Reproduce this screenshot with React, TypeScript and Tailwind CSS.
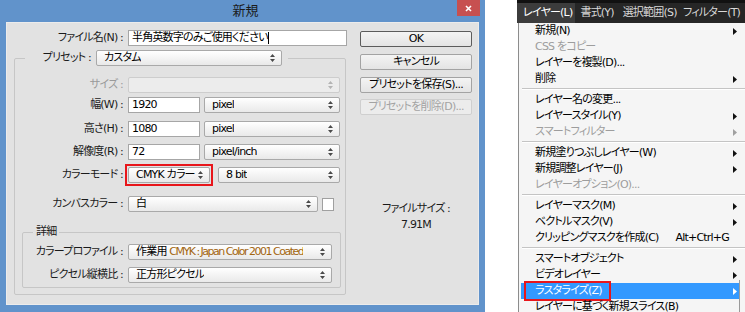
import React from "react";

const FONT = "[font-family:'DejaVu_Sans','Noto_Sans_CJK_JP',sans-serif] [font-feature-settings:'palt'] tracking-[-0.8px]";

function Arrows({ disabled }: { disabled?: boolean }) {
  return (
    <svg width="5" height="8" viewBox="0 0 5 8" className="shrink-0">
      <path d="M2.5 0 L5 3 H0 Z M2.5 8 L0 5 H5 Z" fill={disabled ? "#b4b4b4" : "#4a4a4a"} />
    </svg>
  );
}

function Select({ w, children, disabled }: { w: string; children?: React.ReactNode; disabled?: boolean }) {
  return (
    <div
      className={`${w} h-[16px] flex items-center justify-between pl-[7px] pr-[6px] rounded-[2px] border ${
        disabled ? "border-[#cdcdcd] bg-[#ececec]" : "border-[#a9a9a9] bg-linear-to-b from-white to-[#e9e9e9]"
      } text-[11px] leading-[14px] text-black whitespace-nowrap overflow-hidden shrink-0`}
    >
      <span className="truncate">{children}</span>
      <Arrows disabled={disabled} />
    </div>
  );
}

function Input({ w, children }: { w: string; children?: React.ReactNode }) {
  return (
    <div className={`${w} h-[16px] border border-[#a6a6a6] bg-white pl-[3px] text-[11px] leading-[14px] text-black whitespace-nowrap overflow-hidden shrink-0`}>
      {children}
    </div>
  );
}

function Label({ w, children, disabled }: { w: string; children: React.ReactNode; disabled?: boolean }) {
  return (
    <div className={`${w} shrink-0 text-right text-[11px] leading-[16px] whitespace-nowrap ${disabled ? "text-[#9a9a9a]" : "text-[#1a1a1a]"}`}>
      {children}
    </div>
  );
}

function Btn({ children, disabled, primary, className = "" }: { children: React.ReactNode; disabled?: boolean; primary?: boolean; className?: string }) {
  return (
    <div
      className={`w-[112px] h-[16px] flex items-center justify-center rounded-[2px] border text-[11px] leading-[14px] whitespace-nowrap ${
        disabled
          ? "border-[#cfcfcf] bg-[#ececec] text-[#a3a3a3]"
          : primary
          ? "border-[#5c5c5c] bg-linear-to-b from-[#f4f4f4] to-[#e4e4e4] text-black"
          : "border-[#a3a3a3] bg-linear-to-b from-[#f4f4f4] to-[#e4e4e4] text-black"
      } ${className}`}
    >
      {children}
    </div>
  );
}

function Dialog() {
  return (
    <div className="w-[485px] h-[312px] bg-[#6193cb] flex flex-col px-[6px] shrink-0">
      <div className="relative -mx-[6px] h-[22px] flex items-center justify-center">
        <span className="text-[13px] leading-[16px] text-[#1b1b1b] ml-[6px] tracking-normal">新規</span>
        <div className="absolute right-[5px] top-0 w-[23px] h-[16px] bg-[#c75050] flex items-center justify-center">
          <svg width="7" height="7" viewBox="0 0 7 7">
            <path d="M1 1 L6 6 M6 1 L1 6" stroke="white" strokeWidth="1.6" />
          </svg>
        </div>
      </div>
      <div className="h-[283px] bg-[#e2e2e2] flex border border-[#ececec]">
        {/* left column */}
        <div className="w-[340px] pt-[7px] shrink-0">
          <div className="flex items-center h-[16px]">
            <Label w="w-[116px]">ファイル名(N) :</Label>
            <div className="ml-[5px]">
              <Input w="w-[219px]">
                半角英数字のみご使用ください<span className="inline-block w-px h-[12px] bg-black align-middle" />
              </Input>
            </div>
          </div>

          <fieldset className="ml-[7px] mt-[4px] w-[332px] border border-[#c6c6c6] rounded-[2px] pb-[6px]">
            <legend className="ml-[10px] pr-[6px]">
              <div className="flex items-center h-[16px]">
                <Label w="w-[66px]">プリセット :</Label>
                <div className="ml-[5px]">
                  <Select w="w-[186px]">カスタム</Select>
                </div>
              </div>
            </legend>

            <div className="flex items-center h-[16px] mt-[11px]">
              <Label w="w-[108px]" disabled>サイズ :</Label>
              <div className="ml-[5px]">
                <Select w="w-[212px]" disabled />
              </div>
            </div>

            <div className="flex items-center h-[16px] mt-[4px]">
              <Label w="w-[108px]">幅(W) :</Label>
              <div className="ml-[5px] flex gap-[4px]">
                <Input w="w-[72px]">1920</Input>
                <Select w="w-[136px]">pixel</Select>
              </div>
            </div>

            <div className="flex items-center h-[16px] mt-[8px]">
              <Label w="w-[108px]">高さ(H) :</Label>
              <div className="ml-[5px] flex gap-[4px]">
                <Input w="w-[72px]">1080</Input>
                <Select w="w-[136px]">pixel</Select>
              </div>
            </div>

            <div className="flex items-center h-[16px] mt-[7px]">
              <Label w="w-[108px]">解像度(R) :</Label>
              <div className="ml-[5px] flex gap-[4px]">
                <Input w="w-[72px]">72</Input>
                <Select w="w-[136px]">pixel/inch</Select>
              </div>
            </div>

            <div className="flex items-center h-[16px] mt-[7px]">
              <Label w="w-[108px]">カラーモード :</Label>
              <div className="ml-[5px] flex gap-[8px]">
                <div className="relative">
                  <Select w="w-[82px]">CMYK カラー</Select>
                  <div className="absolute -left-[3px] -top-[3px] w-[88px] h-[22px] border-2 border-[#e8161b]" />
                </div>
                <Select w="w-[122px]">8 bit</Select>
              </div>
            </div>

            <div className="flex items-center h-[16px] mt-[13px]">
              <Label w="w-[108px]">カンバスカラー :</Label>
              <div className="ml-[5px] flex items-center gap-[4px]">
                <Select w="w-[190px]">白</Select>
                <div className="w-[12px] h-[13px] border border-[#a0a0a0] bg-white" />
              </div>
            </div>

            <fieldset className="ml-[7px] mt-[13px] w-[319px] border border-[#c6c6c6] rounded-[2px] pb-[4px]">
              <legend className="ml-[10px] px-[3px] text-[11px] leading-[14px] text-[#1a1a1a]">詳細</legend>
              <div className="flex items-center h-[16px] mt-[5px]">
                <Label w="w-[100px]">カラープロファイル :</Label>
                <div className="ml-[5px]">
                  <Select w="w-[204px]">
                    作業用 <span className="text-[#a3660f] tracking-[-1.5px]">CMYK : Japan Color 2001 Coated</span>
                  </Select>
                </div>
              </div>
              <div className="flex items-center h-[16px] mt-[7px]">
                <Label w="w-[100px]">ピクセル縦横比 :</Label>
                <div className="ml-[5px]">
                  <Select w="w-[204px]">正方形ピクセル</Select>
                </div>
              </div>
            </fieldset>
          </fieldset>
        </div>

        {/* right column */}
        <div className="ml-[13px] pt-[8px] flex flex-col items-center w-[112px]">
          <Btn primary>OK</Btn>
          <Btn className="mt-[7px]">キャンセル</Btn>
          <Btn className="mt-[7px]">プリセットを保存(S)...</Btn>
          <Btn className="mt-[6px]" disabled>プリセットを削除(D)...</Btn>
          <div className="mt-[86px] text-[11px] leading-[16px] text-[#1a1a1a] text-center">ファイルサイズ :</div>
          <div className="text-[11px] leading-[16px] text-[#1a1a1a] text-center">7.91M</div>
        </div>
      </div>
    </div>
  );
}

function TriRight({ color }: { color: string }) {
  return (
    <svg width="4" height="7" viewBox="0 0 4 7" className="shrink-0">
      <path d="M0 0 L4 3.5 L0 7 Z" fill={color} />
    </svg>
  );
}

type Item = { t: string; sub?: boolean; dis?: boolean; sc?: string; hi?: boolean } | "sep";

const items: Item[] = [
  { t: "新規(N)", sub: true },
  { t: "CSS をコピー", dis: true },
  { t: "レイヤーを複製(D)..." },
  { t: "削除", sub: true },
  "sep",
  { t: "レイヤー名の変更..." },
  { t: "レイヤースタイル(Y)", sub: true },
  { t: "スマートフィルター", sub: true, dis: true },
  "sep",
  { t: "新規塗りつぶしレイヤー(W)", sub: true },
  { t: "新規調整レイヤー(J)", sub: true },
  { t: "レイヤーオプション(O)...", dis: true },
  "sep",
  { t: "レイヤーマスク(M)", sub: true },
  { t: "ベクトルマスク(V)", sub: true },
  { t: "クリッピングマスクを作成(C)", sc: "Alt+Ctrl+G" },
  "sep",
  { t: "スマートオブジェクト", sub: true },
  { t: "ビデオレイヤー", sub: true },
  { t: "ラスタライズ(Z)", sub: true, hi: true },
  { t: "レイヤーに基づく新規スライス(B)" },
];

function Menu() {
  return (
    <div className="w-[228px] h-[312px] flex flex-col shrink-0">
      <div className="h-[23px] bg-[#262626] border-t-[3px] border-[#111] flex text-[11px] leading-[20px] text-[#d8d8d8] whitespace-nowrap">
        <div className="w-[61px] pl-[6px] bg-[#3c3c3c] text-white">レイヤー(L)</div>
        <div className="w-[44px] pl-[5px]">書式(Y)</div>
        <div className="w-[63px] pl-[5px]">選択範囲(S)</div>
        <div className="w-[70px] pl-[5px]">フィルター(T)</div>
      </div>
      <div className="w-[232px] flex-1 ml-[1px] bg-[#f5f5f5] border-l border-[#8c8c8c] flex flex-col">
        {items.map((it, i) =>
          it === "sep" ? (
            <div key={i} className="mx-[3px] mt-[1px] mb-[2px] h-[2px] border-t border-[#c4c4c4] bg-white shrink-0" />
          ) : (
            <div
              key={i}
              className={`relative h-[16px] shrink-0 mx-[2px] flex items-center pl-[14px] pr-[11px] text-[11px] leading-[16px] whitespace-nowrap ${
                it.hi ? "bg-[#3399ff] text-white" : it.dis ? "text-[#9d9d9d]" : "text-black"
              }`}
            >
              <span className="flex-1">{it.t}</span>
              {it.sc && <span className="mr-[8px]">{it.sc}</span>}
              {it.sub && <TriRight color={it.hi ? "#ffffff" : it.dis ? "#a0a0a0" : "#111111"} />}
              {it.hi && <div className="absolute left-[3px] -top-[2px] w-[87px] h-[20px] border-2 border-[#e8161b]" />}
            </div>
          )
        )}
      </div>
    </div>
  );
}

export default function App() {
  return (
    <div className={`relative w-[745px] h-[312px] bg-white flex overflow-hidden ${FONT}`}>
      <Dialog />
      <div className="w-[32px] shrink-0" />
      <Menu />
      <div className="absolute left-[739px] top-[280px] w-[10px] h-[40px] bg-[#f5f5f5] border-l border-[#9a9a9a]" />
    </div>
  );
}
